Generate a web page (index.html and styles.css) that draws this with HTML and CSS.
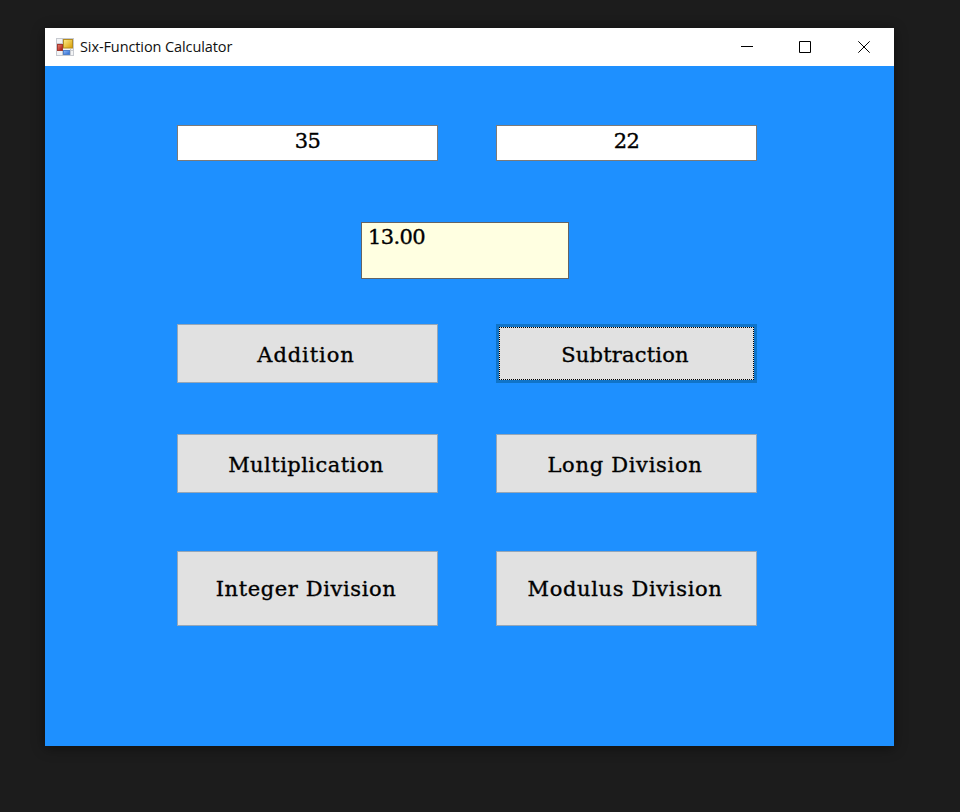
FILE: index.html
```html
<!DOCTYPE html>
<html lang="en">
<head>
<meta charset="utf-8">
<title>Six-Function Calculator</title>
<link rel="stylesheet" href="styles.css">
</head>
<body>
<main class="window">
  <header class="titlebar">
    <svg class="app-icon" width="18" height="18" viewBox="0 0 18 18" aria-hidden="true">
      <defs>
        <linearGradient id="gold" x2="1" y2="1"><stop stop-color="#ffed8c"/><stop offset="1" stop-color="#d89c00"/></linearGradient>
        <linearGradient id="red" x2="1" y2="1"><stop stop-color="#e88474"/><stop offset="1" stop-color="#a81008"/></linearGradient>
        <linearGradient id="blue" x2="1" y2="1"><stop stop-color="#92bdf8"/><stop offset="1" stop-color="#2864d0"/></linearGradient>
      </defs>
      <rect x="0.5" y="0.5" width="17" height="17" fill="#f2f3f5" stroke="#c6c9cf"/>
      <path d="M6.5 1v16M1 5.5h6M1 12.5h16M14.5 11v6" stroke="#c6c9cf"/>
      <rect x="7.5" y="1.5" width="9" height="8.5" fill="url(#gold)" stroke="#b58c20"/>
      <rect x="1.5" y="6.5" width="5" height="6" fill="url(#red)" stroke="#a4382e"/>
      <rect x="7.5" y="12.5" width="6" height="4" fill="url(#blue)" stroke="#5080c8"/>
    </svg>
    <h1 class="title">Six-Function Calculator</h1>
    <div class="controls">
      <svg width="12" height="12" viewBox="0 0 12 12"><path d="M1 5.5h12"/></svg>
      <svg width="12" height="12" viewBox="0 0 12 12"><path d="M.5 .5h11v11H.5z"/></svg>
      <svg width="12" height="12" viewBox="0 0 12 12"><path d="M.3 .3l11.4 11.4M11.7 .3L.3 11.7"/></svg>
    </div>
  </header>
  <div class="client">
    <div class="pair inputs">
      <div class="field"><span>35</span></div>
      <div class="field"><span>22</span></div>
    </div>
    <div class="result"><span>13.00</span></div>
    <div class="pair keys">
      <button class="key"><span class="addition">Addition</span></button>
      <button class="key focused"><span class="subtraction">Subtraction</span></button>
      <button class="key"><span class="multiplication">Multiplication</span></button>
      <button class="key"><span class="long">Long Division</span></button>
      <button class="key"><span class="integer">Integer Division</span></button>
      <button class="key"><span class="modulus">Modulus Division</span></button>
    </div>
  </div>
</main>
</body>
</html>
```
FILE: styles.css
```css
* { box-sizing: border-box; }
body {
  margin: 0;
  height: 812px;
  padding: 28px 0 0 45px;
  background: #1c1c1c;
  overflow: hidden;
}
.window {
  width: 849px;
  height: 718px;
  background: #1e90ff;
  box-shadow: 0 2px 12px rgba(0, 0, 0, .45);
}
.titlebar {
  display: flex;
  align-items: center;
  height: 38px;
  padding: 0 24px 0 11px;
  background: #fff;
}
.app-icon { margin-right: 6px; }
.title {
  margin: 0;
  font: 400 14.5px/20px "Open Sans", sans-serif;
  letter-spacing: -.1px;
  color: #111;
}
.controls {
  display: flex;
  gap: 47px;
  margin-left: auto;
}
.controls svg { fill: none; stroke: #000; stroke-width: 1; overflow: visible; }
.client {
  padding: 59px 0 0 132px;
  font-family: "DejaVu Serif", serif;
  font-size: 21px;
  color: #000;
  -webkit-text-stroke: .35px #000;
}
.pair {
  display: grid;
  grid-template-columns: 261px 261px;
  column-gap: 58px;
}
.field {
  height: 36px;
  border: 1px solid #7a7a7a;
  background: #fff;
  text-align: center;
  line-height: 31px;
  letter-spacing: -.5px;
}
.result {
  width: 208px;
  height: 57px;
  margin: 61px 0 0 184px;
  padding-left: 6px;
  border: 1px solid #646464;
  background: #ffffe1;
  line-height: 29px;
  letter-spacing: -.6px;
}
.keys {
  grid-template-rows: 59px 59px 75px;
  row-gap: 51px;
  margin-top: 45px;
}
.key {
  padding: 2px 3px 0 0;
  border: 1px solid #94a6b8;
  background: #e1e1e1;
  font: inherit;
  color: inherit;
  white-space: nowrap;
}
.key:nth-child(n + 5) { margin-top: 7px; height: 75px; padding-top: 0; }
.key.focused {
  border: 3px solid #1074c8;
  outline: 1px dotted #000;
  outline-offset: -4px;
}
.addition { letter-spacing: .9px; }
.subtraction { letter-spacing: .2px; }
.multiplication { letter-spacing: .45px; }
.long { letter-spacing: .7px; }
.integer { letter-spacing: .6px; }
.modulus { letter-spacing: .65px; }
```
